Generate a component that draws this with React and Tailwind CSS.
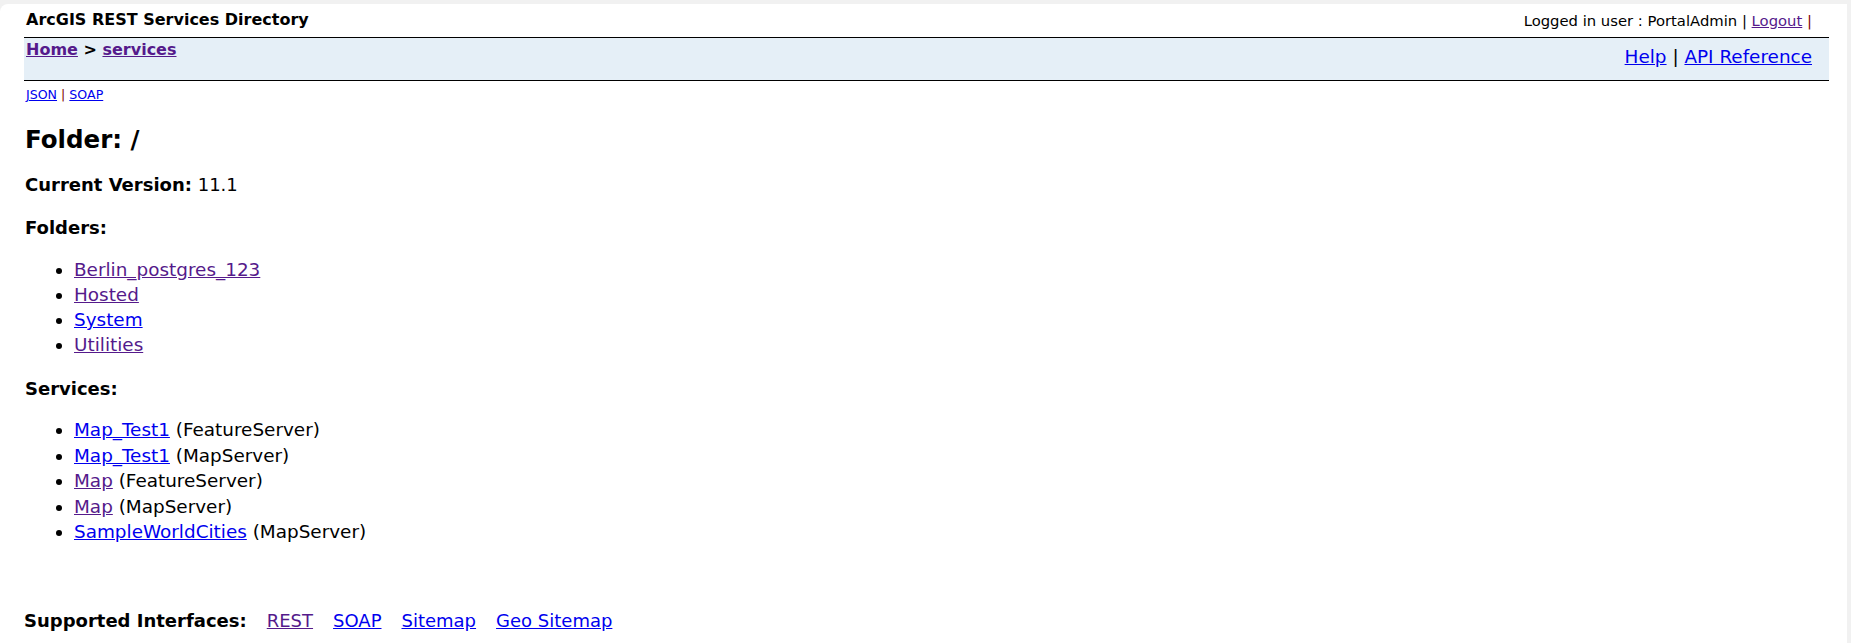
import React from "react";

const font = { fontFamily: '"DejaVu Sans", Verdana, sans-serif' };

function V({ children }) {
  return <a className="text-[#551A8B] underline">{children}</a>;
}
function B({ children }) {
  return <a className="text-[#0000EE] underline">{children}</a>;
}

export default function App() {
  return (
    <div className="bg-[#f1f1f1] pt-[4px] pr-[4px] w-[1851px] h-[643px] overflow-hidden" style={font}>
      <div className="bg-white rounded-tl-[8px] h-[639px] pl-[24px] pr-[18px] text-black">
        <div className="flex justify-between h-[34px] border-b border-black pt-[6px] leading-[20px]">
          <div className="pl-[2px] text-[16px] font-bold">ArcGIS REST Services Directory</div>
          <div className="pr-[17px] pt-[1px] text-[14.8px]">
            Logged in user : PortalAdmin | <V>Logout</V> <span className="text-[#800000]">|</span>
          </div>
        </div>
        <div className="flex justify-between h-[43px] bg-[#E5EFF7] border-b border-black">
          <div className="pl-[2px] pt-[1px] text-[16px] font-bold leading-[22px]">
            <V>Home</V> &gt; <V>services</V>
          </div>
          <div className="pr-[17px] pt-[8px] text-[18.4px] leading-[22px]">
            <B>Help</B> | <B>API Reference</B>
          </div>
        </div>
        <div className="mt-[7px] pl-[2px] text-[12.6px] leading-[14px]">
          <B>JSON</B> <span className="text-[#800000]">|</span> <B>SOAP</B>
        </div>
        <h2 className="mt-[24px] pl-[1px] text-[24.5px] font-bold leading-[28px]">Folder: /</h2>
        <div className="mt-[20px] pl-[1px] text-[18px] leading-[22px]">
          <b>Current Version:</b> 11.1
        </div>
        <div className="mt-[21px] pl-[1px] text-[18px] font-bold leading-[22px]">Folders:</div>
        <ul className="mt-[18px] list-disc pl-[50px] text-[18.4px] leading-[25px]">
          <li><V>Berlin_postgres_123</V></li>
          <li><V>Hosted</V></li>
          <li><B>System</B></li>
          <li><V>Utilities</V></li>
        </ul>
        <div className="mt-[21px] pl-[1px] text-[18px] font-bold leading-[22px]">Services:</div>
        <ul className="mt-[17px] list-disc pl-[50px] text-[18.4px] leading-[25.5px]">
          <li><B>Map_Test1</B> (FeatureServer)</li>
          <li><B>Map_Test1</B> (MapServer)</li>
          <li><V>Map</V> (FeatureServer)</li>
          <li><V>Map</V> (MapServer)</li>
          <li><B>SampleWorldCities</B> (MapServer)</li>
        </ul>
        <div className="mt-[65px] flex items-baseline gap-[20px] text-[18px] leading-[22px]">
          <b>Supported Interfaces:</b>
          <V>REST</V>
          <B>SOAP</B>
          <B>Sitemap</B>
          <B>Geo Sitemap</B>
        </div>
      </div>
    </div>
  );
}
